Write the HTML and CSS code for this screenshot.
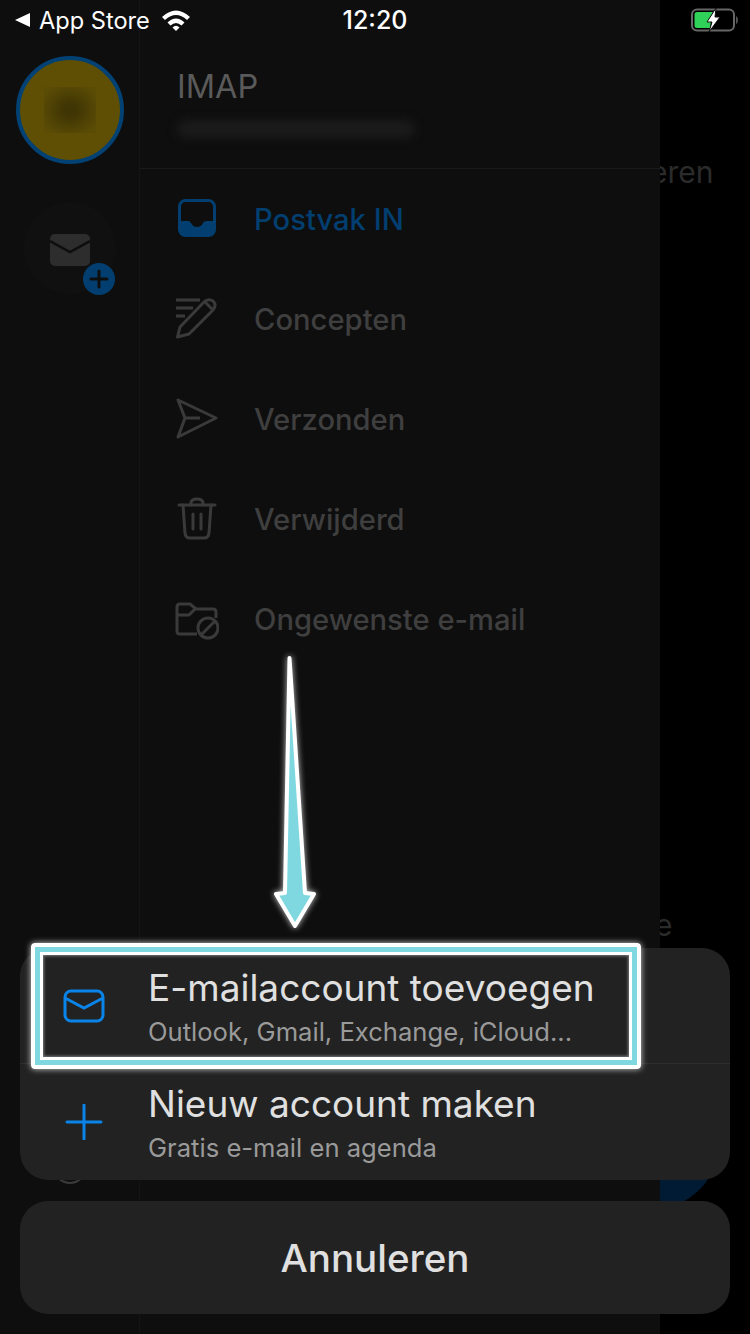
FILE: index.html
```html
<!DOCTYPE html>
<html lang="nl">
<head>
    <meta charset="UTF-8">
    <meta name="viewport" content="width=device-width, initial-scale=1.0">
    <title>E-mailaccount toevoegen</title>
    <link rel="stylesheet" href="styles.css">
</head>
<body>
    <!-- Page behind the drawer, only slivers show -->
    <div class="behind-text behind-top">eren</div>
    <div class="behind-text behind-low">e</div>
    <div class="fab"></div>

    <div class="drawer">
        <div class="rail">
            <div class="avatar"><div class="avatar-blur"></div></div>
            <div class="add-account">
                <svg class="add-mail" viewBox="0 0 40 32">
                    <rect width="40" height="32" rx="5" fill="#2d2d2d"/>
                    <path d="M0 7 L20 18 L40 7" fill="none" stroke="#0e0e0e" stroke-width="2.5"/>
                </svg>
                <svg class="add-badge" viewBox="0 0 32 32">
                    <circle cx="16" cy="16" r="16" fill="#023f70"/>
                    <path d="M16 8 V24 M8 16 H24" stroke="#0e0e0e" stroke-width="3" stroke-linecap="round"/>
                </svg>
            </div>
            <div class="help"></div>
        </div>
        <div class="panel">
            <div class="panel-head">
                <div class="account-type">IMAP</div>
                <div class="account-mail"></div>
            </div>
            <div class="menu">
                <div class="menu-row active">
                    <svg class="menu-icon" viewBox="0 0 44 44">
                        <rect x="4.500" y="3.500" width="35" height="35" rx="6" fill="none" stroke="#023f70" stroke-width="3"/>
                        <path d="M4 24 H13 Q15 24 16 26 Q18 30 22 30 Q26 30 28 26 Q29 24 31 24 H40 V33 Q40 39 34 39 H10 Q4 39 4 33 Z" fill="#023f70"/>
                    </svg>
                    <span>Postvak IN</span>
                </div>
                <div class="menu-row">
                    <svg class="menu-icon" viewBox="0 0 44 44">
                        <g fill="none" stroke="#3a3a3a" stroke-width="3" stroke-linejoin="round">
                            <path d="M1 3 H25 M1 11 H18 M1 19 H10"/>
                            <path d="M2.500 40 L5 30 L29 5 Q33 1 38 4 Q42 8 38 13 L14 37 Z"/>
                            <path d="M30 5 L38 13"/>
                        </g>
                    </svg>
                    <span>Concepten</span>
                </div>
                <div class="menu-row">
                    <svg class="menu-icon" viewBox="0 0 44 44">
                        <path d="M3 3 L41 21 L3 40 L10 21 Z M10 21 H25" fill="none" stroke="#3a3a3a" stroke-width="3" stroke-linejoin="round"/>
                    </svg>
                    <span>Verzonden</span>
                </div>
                <div class="menu-row">
                    <svg class="menu-icon" viewBox="0 0 44 44">
                        <g fill="none" stroke="#3a3a3a" stroke-width="3" stroke-linecap="round">
                            <path d="M4 8 H40"/>
                            <path d="M16 8 V6 Q16 2 22 2 Q28 2 28 6 V8"/>
                            <path d="M8 8 L10 36 Q10.500 41 15 41 H29 Q33.500 41 34 36 L36 8"/>
                            <path d="M18 17 V32 M26 17 V32"/>
                        </g>
                    </svg>
                    <span>Verwijderd</span>
                </div>
                <div class="menu-row">
                    <svg class="menu-icon" viewBox="0 0 44 44">
                        <g fill="none" stroke="#3a3a3a" stroke-width="3" stroke-linejoin="round">
                            <path d="M22 37 H5 Q2 37 2 34 V10 Q2 7 5 7 H15 L21 12 H38 Q41 12 41 15 V21"/>
                            <path d="M2 18 H14 L20 12"/>
                            <circle cx="33" cy="31" r="10"/>
                            <path d="M26 38 L40 24"/>
                        </g>
                    </svg>
                    <span>Ongewenste e-mail</span>
                </div>
            </div>
        </div>
    </div>

    <div class="statusbar">
        <div class="status-left">
            <svg class="back-arrow" viewBox="0 0 15 14"><path d="M0 7 L15 0 V14 Z" fill="#fff"/></svg>
            <span>App Store</span>
            <svg class="wifi" viewBox="0 0 30 22">
                <path d="M1 8 Q15 -5 29 8 L26 11 Q15 1 4 11 Z" fill="#fff"/>
                <path d="M6.500 13.500 Q15 5.500 23.500 13.500 L20.500 16.500 Q15 11.500 9.500 16.500 Z" fill="#fff"/>
                <path d="M11.500 18.500 Q15 15 18.500 18.500 L15 22 Z" fill="#fff"/>
            </svg>
        </div>
        <div class="status-time">12:20</div>
        <div class="status-right">
            <svg class="battery" viewBox="0 0 48 24">
                <rect x="2" y="1.500" width="42" height="21" rx="5" fill="none" stroke="#666" stroke-width="2"/>
                <path d="M4.500 6.500 Q4.500 4 7 4 H23 L18 13 H21 L20 20 H7 Q4.500 20 4.500 17.500 Z" fill="#30d158"/>
                <path d="M26 0 L17 14 H22 L19 24 L30 9 H25 Z" fill="#fff" stroke="#0e0e0e" stroke-width="1"/>
                <path d="M46 8 Q48 9 48 12 Q48 15 46 16 Z" fill="#555"/>
            </svg>
        </div>
    </div>

    <div class="sheet">
        <div class="sheet-group">
            <div class="sheet-row">
                <svg class="sheet-icon" viewBox="0 0 44 36">
                    <rect x="3" y="3" width="38" height="30" rx="6" fill="none" stroke="#0a84e8" stroke-width="3"/>
                    <path d="M3 10 L22 20 L41 10" fill="none" stroke="#0a84e8" stroke-width="3"/>
                </svg>
                <div class="sheet-text">
                    <div class="sheet-title">E-mailaccount toevoegen</div>
                    <div class="sheet-sub">Outlook, Gmail, Exchange, iCloud...</div>
                </div>
            </div>
            <div class="sheet-row">
                <svg class="sheet-icon" viewBox="0 0 44 36">
                    <path d="M22 1 V35 M5 18 H39" fill="none" stroke="#0a84e8" stroke-width="3" stroke-linecap="round"/>
                </svg>
                <div class="sheet-text">
                    <div class="sheet-title">Nieuw account maken</div>
                    <div class="sheet-sub">Gratis e-mail en agenda</div>
                </div>
            </div>
        </div>
        <div class="sheet-cancel">Annuleren</div>
    </div>

    <!-- Annotation drawn on top of the screenshot -->
    <div class="highlight"></div>
    <svg class="arrow" viewBox="0 0 60 290">
        <path d="M24.500 13 L40 248 L49 249 L30 281 L11 249 L20 248 Z" fill="#7fd8e0" stroke="#fff" stroke-width="4" stroke-linejoin="round"/>
    </svg>
</body>
</html>
```

FILE: styles.css
```css
body {
    position: relative;
    width: 750px;
    height: 1334px;
    margin: 0;
    overflow: hidden;
    background-color: #000;
    font-family: Inter, "Noto Sans", sans-serif;
}

.behind-text {
    position: absolute;
    color: #2b2b2b;
    font-size: 30px;
    line-height: 36px;
}
.behind-top {
    left: 650px;
    top: 154px;
}
.behind-low {
    left: 655px;
    top: 907px;
}
.fab {
    position: absolute;
    left: 580px;
    top: 1070px;
    width: 140px;
    height: 140px;
    border-radius: 50%;
    background-color: #001b33;
}

.drawer {
    position: relative;
    display: flex;
    width: 660px;
    height: 100%;
    background-color: #0e0e0e;
}
.rail {
    display: flex;
    flex-direction: column;
    align-items: center;
    width: 140px;
    padding-top: 56px;
    padding-bottom: 150px;
    box-sizing: border-box;
    border-right: 1px solid #141414;
}
.avatar {
    display: flex;
    justify-content: center;
    align-items: center;
    width: 108px;
    height: 108px;
    box-sizing: border-box;
    border: 4px solid #024173;
    border-radius: 50%;
    background-color: #5e4f05;
}
.avatar-blur {
    width: 52px;
    height: 46px;
    background: radial-gradient(ellipse at center, #3f3504 15%, #5b4c05 85%);
}
.add-account {
    position: relative;
    display: flex;
    justify-content: center;
    align-items: center;
    width: 92px;
    height: 92px;
    margin-top: 38px;
    border-radius: 50%;
    background-color: #101010;
}
.add-mail {
    width: 40px;
    height: 32px;
    margin-top: 4px;
}
.add-badge {
    position: absolute;
    right: 1px;
    bottom: -1px;
    width: 32px;
    height: 32px;
}
.help {
    width: 34px;
    height: 34px;
    margin-top: auto;
    box-sizing: border-box;
    border: 2px solid #3a3a3a;
    border-radius: 50%;
}

.panel {
    flex: 1;
}
.panel-head {
    height: 169px;
    padding-top: 66px;
    padding-left: 37px;
    box-sizing: border-box;
    border-bottom: 1px solid #1a1a1a;
}
.account-type {
    color: #5a5a5a;
    font-size: 32.500px;
    line-height: 42px;
}
.account-mail {
    width: 238px;
    height: 18px;
    margin-top: 12px;
    border-radius: 9px;
    background-color: #1b1b1b;
    filter: blur(5px);
}
.menu-row {
    display: flex;
    align-items: center;
    gap: 35px;
    height: 100px;
    padding-left: 35px;
    color: #3f3f3f;
    font-size: 29.200px;
    font-weight: 500;
}
.menu-row.active {
    color: #023f70;
}
.menu-icon {
    flex: none;
    width: 44px;
    height: 44px;
}

.statusbar {
    position: absolute;
    top: 0;
    left: 0;
    right: 0;
    display: grid;
    grid-template-columns: 1fr auto 1fr;
    align-items: center;
    height: 40px;
    padding: 0 15px;
    color: #fff;
    font-size: 23.600px;
}
.status-left {
    display: flex;
    align-items: center;
}
.status-left span {
    margin-left: 9px;
}
.back-arrow {
    width: 15px;
    height: 14px;
}
.wifi {
    width: 30px;
    height: 22px;
    margin-left: 11px;
}
.status-time {
    font-size: 25px;
    font-weight: 500;
}
.status-right {
    display: flex;
    justify-content: flex-end;
}
.battery {
    width: 48px;
    height: 24px;
    margin-right: -3px;
}

.sheet {
    position: absolute;
    left: 20px;
    right: 20px;
    top: 948px;
}
.sheet-group {
    border-radius: 28px;
    background-color: #222;
}
.sheet-row {
    display: flex;
    align-items: center;
    height: 115px;
    padding-left: 42px;
    box-sizing: border-box;
}
.sheet-row + .sheet-row {
    height: 117px;
    border-top: 1px solid #2e2e2e;
}
.sheet-icon {
    flex: none;
    width: 44px;
    height: 36px;
}
.sheet-text {
    margin-left: 42px;
    padding-top: 2px;
}
.sheet-title {
    color: #e0e0e0;
    font-size: 37px;
    line-height: 44px;
}
.sheet-sub {
    margin-top: 6px;
    color: #9a9a9a;
    font-size: 25.600px;
    line-height: 32px;
}
.sheet-cancel {
    display: flex;
    justify-content: center;
    align-items: center;
    height: 113px;
    margin-top: 21px;
    border-radius: 28px;
    background-color: #222;
    color: #e0e0e0;
    font-size: 38.500px;
    font-weight: 500;
}

.highlight {
    position: absolute;
    left: 31px;
    top: 943px;
    width: 610px;
    height: 126px;
    box-sizing: border-box;
    border: 4px solid #fff;
    border-radius: 4px;
    box-shadow: 0 0 6px rgba(255, 255, 255, 0.8),
        inset 0 0 0 5px #7fd8e0,
        inset 0 0 0 8px #fff,
        inset 0 0 3px 9px rgba(255, 255, 255, 0.4);
}
.arrow {
    position: absolute;
    left: 265px;
    top: 645px;
    width: 60px;
    height: 290px;
    filter: drop-shadow(0 0 3px rgba(255, 255, 255, 0.8));
}
```
